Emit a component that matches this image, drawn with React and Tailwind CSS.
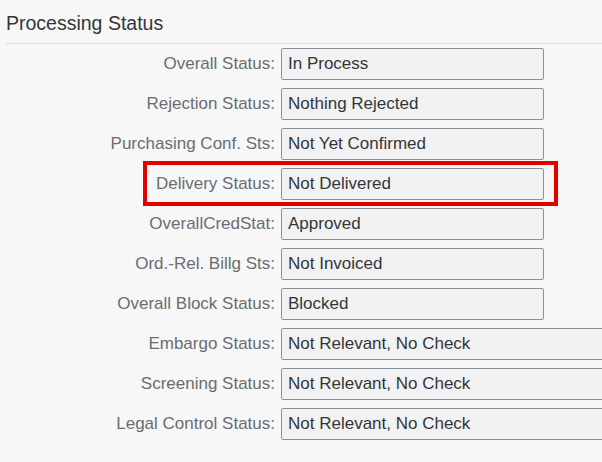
import React from "react";

const rows = [
  { label: "Overall Status:", value: "In Process" },
  { label: "Rejection Status:", value: "Nothing Rejected" },
  { label: "Purchasing Conf. Sts:", value: "Not Yet Confirmed" },
  { label: "Delivery Status:", value: "Not Delivered", highlight: true },
  { label: "OverallCredStat:", value: "Approved" },
  { label: "Ord.-Rel. Billg Sts:", value: "Not Invoiced" },
  { label: "Overall Block Status:", value: "Blocked" },
  { label: "Embargo Status:", value: "Not Relevant, No Check", wide: true },
  { label: "Screening Status:", value: "Not Relevant, No Check", wide: true },
  { label: "Legal Control Status:", value: "Not Relevant, No Check", wide: true },
];

const StatusRow = ({ row }) => (
  <div className="relative flex items-center h-8">
    <div className="w-[276px] shrink-0 text-right text-[17px] text-[#6a6d70] pr-[1px] pb-[1px]">
      {row.label}
    </div>
    <div
      className={
        "ml-[5px] shrink-0 h-8 flex items-center px-[6px] pb-[1px] bg-[#f2f2f2] border border-[#89919a] rounded-[2px] text-[17px] text-[#32363a] " +
        (row.wide ? "w-[360px]" : "w-[263px]")
      }
    >
      {row.value}
    </div>
    {/* red callout around the delivery row */}
    {row.highlight && (
      <div className="absolute left-[143px] top-[-7px] w-[415px] h-[45px] border-4 border-[#e50000]" />
    )}
  </div>
);

export default function App() {
  return (
    <div
      className="w-[602px] h-[462px] overflow-hidden bg-[#f7f7f7]"
      style={{ fontFamily: '"Liberation Sans", Arial, sans-serif' }}
    >
      <div className="pl-[6px]">
        <div className="h-[43px] flex items-center text-[19.5px] text-[#32363a] pt-[4px]">
          Processing Status
        </div>
        <div className="h-px bg-[#d9d9d9]" />
      </div>
      <div className="mt-1 flex flex-col gap-2">
        {rows.map((row) => (
          <StatusRow key={row.label} row={row} />
        ))}
      </div>
    </div>
  );
}
